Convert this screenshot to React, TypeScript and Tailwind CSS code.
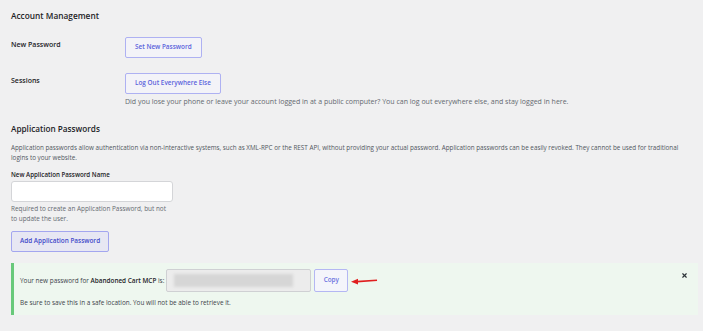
import { X } from 'lucide-react';

function Row({ label, children }: { label: string; children: React.ReactNode }) {
  return (
    <div className="flex">
      <div className="w-[114px] shrink-0 pt-[3px] text-[7px] font-semibold text-[#1d2327]">{label}</div>
      <div>{children}</div>
    </div>
  );
}

function OutlineButton({ children }: { children: React.ReactNode }) {
  return (
    <button className="block h-[21px] px-[9px] rounded-[2px] border border-[#aeb1f2] bg-[#f3f3f8] font-semibold text-[#5b63dc] leading-none">
      {children}
    </button>
  );
}

export default function App() {
  return (
    <div
      className="min-h-[331px] w-full bg-[#f0f0f1] pl-[11px] pr-[5px] pt-[10px] text-[6.4px] leading-[10px] text-[#3c434a]"
      style={{ fontFamily: '"Open Sans", "Noto Sans", sans-serif' }}
    >
      {/* Account Management */}
      <h2 className="text-[8.3px] leading-[12px] font-semibold text-[#1d2327]">Account Management</h2>

      <div className="mt-[15px]">
        <Row label="New Password">
          <OutlineButton>Set New Password</OutlineButton>
        </Row>
      </div>

      <div className="mt-[15px]">
        <Row label="Sessions">
          <OutlineButton>Log Out Everywhere Else</OutlineButton>
          <p className="mt-[3px] text-[7px] text-[#646970] whitespace-nowrap">
            Did you lose your phone or leave your account logged in at a public computer? You can log out everywhere else, and stay logged in here.
          </p>
        </Row>
      </div>

      {/* Application Passwords */}
      <h2 className="mt-[16px] text-[8.2px] leading-[12px] font-semibold text-[#1d2327]">Application Passwords</h2>
      <p className="mt-[8px] max-w-[686px] text-[6.3px] text-[#50575e]">
        Application passwords allow authentication via non-interactive systems, such as XML-RPC or the REST API, without providing your actual password. Application passwords can be easily revoked. They cannot be used for traditional logins to your website.
      </p>

      <div className="mt-[7px] text-[6.2px] font-semibold text-[#1d2327]">New Application Password Name</div>
      <input
        type="text"
        className="mt-[1px] block h-[21px] w-[162px] rounded-[3px] border border-[#d4d5d8] bg-white"
      />
      <p className="mt-[2px] w-[162px] text-[#646970]">
        Required to create an Application Password, but not to update the user.
      </p>

      <button className="mt-[7px] block h-[21px] px-[8px] rounded-[2px] border border-[#a3a6ef] bg-[#e7e7f3] font-semibold text-[#4149c9] leading-none">
        Add Application Password
      </button>

      {/* Success notice */}
      <div className="relative mt-[11px] h-[52px] border-l-[3px] border-[#68c97a] bg-[#eef7ef] pl-[6px] pt-[6px]">
        <div className="flex items-center">
          <span className="text-[#3c434a]">
            Your new password for <strong className="font-semibold text-[#1d2327]">Abandoned Cart MCP</strong> is:
          </span>
          <div className="ml-[2px] flex h-[23px] w-[145px] items-center rounded-[2px] border border-[#cfd0d3] bg-[#ececec] pl-[7px]">
            <div className="h-[13px] w-[119px] bg-[#d6d6d6] blur-[1.5px]" />
          </div>
          <button className="ml-[3px] h-[23px] w-[34px] rounded-[2px] border border-[#b4b7f3] bg-[#f4f5fb] font-semibold text-[#6b72df] leading-none">
            Copy
          </button>
          <svg width="28" height="8" viewBox="0 0 28 8" className="ml-[2px]">
            <path d="M7 4.6 L27 3.2" stroke="#e01e1e" strokeWidth="1.6" fill="none" />
            <path d="M1 4.8 L8 1.8 L8 7.4 Z" fill="#e01e1e" />
          </svg>
        </div>
        <p className="mt-[6px] text-[#3c434a]">
          Be sure to save this in a safe location. You will not be able to retrieve it.
        </p>
        <X className="absolute right-[10px] top-[9px] h-[7px] w-[7px] text-[#2c3338]" strokeWidth={4} />
      </div>
    </div>
  );
}
